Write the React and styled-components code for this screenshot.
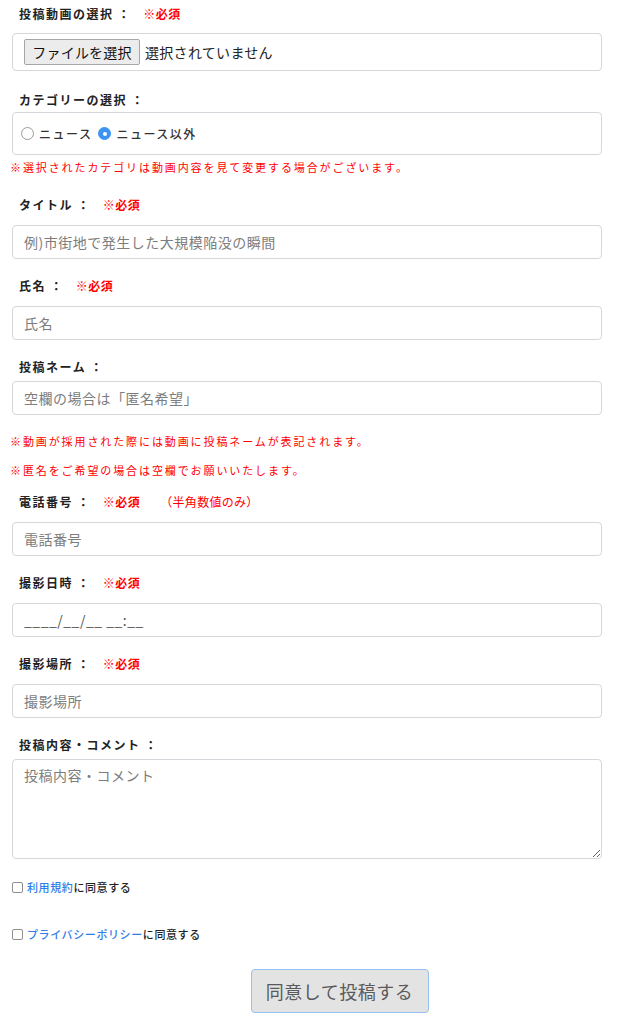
import React from "react";
import styled, { createGlobalStyle } from "styled-components";

const GlobalStyle = createGlobalStyle`
  html, body { margin: 0; padding: 0; background: #fff; }
  body {
    font-family: "Noto Sans CJK JP", "Noto Sans", "Liberation Sans", sans-serif;
    color: #222;
  }
  * { box-sizing: border-box; }
`;

const Form = styled.form`
  width: 602px;
  padding: 4px 0 12px 12px;
  display: flex;
  flex-direction: column;
`;

const Group = styled.div`
  display: flex;
  flex-direction: column;
  margin-top: ${(p) => p.$top ?? 17}px;
`;

const Label = styled.div`
  padding-left: 7px;
  font-size: 12px;
  font-weight: 700;
  letter-spacing: 1.5px;
  line-height: 20px;
  color: #222;
  margin-bottom: ${(p) => p.$gap ?? 10}px;
  white-space: nowrap;
`;

const Required = styled.span`
  margin-left: 12px;
  color: #ff0000;
  font-size: 12px;
  font-weight: 700;
  letter-spacing: 0.5px;
`;

const Hint = styled.span`
  margin-left: 20px;
  color: #ff0000;
  font-size: 12px;
  font-weight: 400;
  letter-spacing: 0.3px;
`;

const Note = styled.p`
  margin: ${(p) => p.$top ?? 4}px 0 0 -2px;
  color: #ff0000;
  font-size: 11px;
  letter-spacing: 1.9px;
  line-height: 16px;
  white-space: nowrap;
`;

const Box = styled.div`
  display: flex;
  align-items: center;
  height: ${(p) => p.$h}px;
  border: 1px solid #d4d7db;
  border-radius: 4px;
  padding: 0 ${(p) => p.$pad ?? 11}px;
  background: #fff;
`;

const FileButton = styled.span`
  display: inline-flex;
  align-items: center;
  justify-content: center;
  width: 116px;
  height: 26px;
  background: #ececec;
  border: 1px solid #a6a6a6;
  border-radius: 2px;
  font-size: 14px;
  color: #111;
  letter-spacing: 0.2px;
`;

const FileStatus = styled.span`
  margin-left: 5px;
  font-size: 14px;
  color: #222;
  letter-spacing: 0.3px;
`;

const Radio = styled.span`
  display: inline-block;
  position: relative;
  width: 13px;
  height: 13px;
  border-radius: 50%;
  flex: none;
  margin-left: ${(p) => (p.$first ? 0 : 6)}px;
  margin-right: 5px;
  border: 1px solid ${(p) => (p.$checked ? "#3b93f2" : "#9a9a9a")};
  background: ${(p) => (p.$checked ? "#3b93f2" : "#fff")};
  &::after {
    content: "";
    display: ${(p) => (p.$checked ? "block" : "none")};
    position: absolute;
    left: 3.5px;
    top: 3.5px;
    width: 4px;
    height: 4px;
    border-radius: 50%;
    background: #fff;
  }
`;

const RadioText = styled.span`
  font-size: 12px;
  letter-spacing: 1.5px;
  color: #333;
  font-weight: 500;
`;

const Input = styled.input`
  height: 34px;
  width: 100%;
  border: 1px solid #d4d7db;
  border-radius: 4px;
  padding: 0 11px;
  font-family: inherit;
  font-size: 14px;
  letter-spacing: 0.5px;
  color: #555;
  background: #fff;
  outline: none;
  &::placeholder { color: #7d7d7d; }
`;

const TextArea = styled.textarea`
  height: 100px;
  width: 100%;
  border: 1px solid #d4d7db;
  border-radius: 4px;
  padding: 5px 11px;
  font-family: inherit;
  font-size: 14px;
  line-height: 21px;
  letter-spacing: 0.5px;
  color: #555;
  resize: vertical;
  outline: none;
  &::placeholder { color: #7d7d7d; }
`;

const CheckRow = styled.label`
  display: flex;
  align-items: center;
  height: 20px;
  margin-top: ${(p) => p.$top}px;
  font-size: 11px;
  letter-spacing: 0.6px;
  color: #222;
  font-weight: 500;
`;

const CheckBox = styled.span`
  display: inline-block;
  width: 11px;
  height: 11px;
  border: 1px solid #8f8f8f;
  border-radius: 2px;
  background: #fff;
  margin: 1px 4px 0 0;
  flex: none;
`;

const Link = styled.a`
  color: #2f7de9;
  text-decoration: none;
`;

const ButtonRow = styled.div`
  display: flex;
  justify-content: center;
  padding-left: 65px;
  margin-top: 25px;
`;

const Submit = styled.button`
  width: 178px;
  height: 44px;
  background: #e3e3e3;
  border: 1px solid #94bfee;
  border-radius: 4px;
  font-family: inherit;
  font-size: 18px;
  letter-spacing: 0.5px;
  color: #5a5a5a;
`;

const Field = ({ label, required, hint, top, gap, children }) => (
  <Group $top={top}>
    <Label $gap={gap}>
      {label}
      {required && <Required>※必須</Required>}
      {hint && <Hint>（半角数値のみ）</Hint>}
    </Label>
    {children}
  </Group>
);

export default function App() {
  return (
    <>
      <GlobalStyle />
      <Form onSubmit={(e) => e.preventDefault()}>
        <Field label="投稿動画の選択 ：" required top={0} gap={9}>
          <Box $h={38}>
            <FileButton>ファイルを選択</FileButton>
            <FileStatus>選択されていません</FileStatus>
          </Box>
        </Field>

        <Field label="カテゴリーの選択 ：" top={19} gap={2}>
          <Box $h={43} $pad={8}>
            <Radio $first />
            <RadioText>ニュース</RadioText>
            <Radio $checked />
            <RadioText>ニュース以外</RadioText>
          </Box>
        </Field>
        <Note>※選択されたカテゴリは動画内容を見て変更する場合がございます。</Note>

        <Field label="タイトル ：" required top={20}>
          <Input placeholder="例)市街地で発生した大規模陥没の瞬間" />
        </Field>

        <Field label="氏名 ：" required>
          <Input placeholder="氏名" />
        </Field>

        <Field label="投稿ネーム ：" gap={4}>
          <Input placeholder="空欄の場合は「匿名希望」" />
        </Field>
        <Note $top={18}>※動画が採用された際には動画に投稿ネームが表記されます。</Note>
        <Note $top={13}>※匿名をご希望の場合は空欄でお願いいたします。</Note>

        <Field label="電話番号 ：" required hint top={14}>
          <Input placeholder="電話番号" />
        </Field>

        <Field label="撮影日時 ：" required>
          <Input defaultValue="____/__/__ __:__" />
        </Field>

        <Field label="撮影場所 ：" required>
          <Input placeholder="撮影場所" />
        </Field>

        <Field label="投稿内容・コメント ：" gap={4}>
          <TextArea placeholder="投稿内容・コメント" />
        </Field>

        <CheckRow $top={18}>
          <CheckBox />
          <Link href="#">利用規約</Link>に同意する
        </CheckRow>
        <CheckRow $top={27}>
          <CheckBox />
          <Link href="#">プライバシーポリシー</Link>に同意する
        </CheckRow>

        <ButtonRow>
          <Submit type="submit">同意して投稿する</Submit>
        </ButtonRow>
      </Form>
    </>
  );
}
